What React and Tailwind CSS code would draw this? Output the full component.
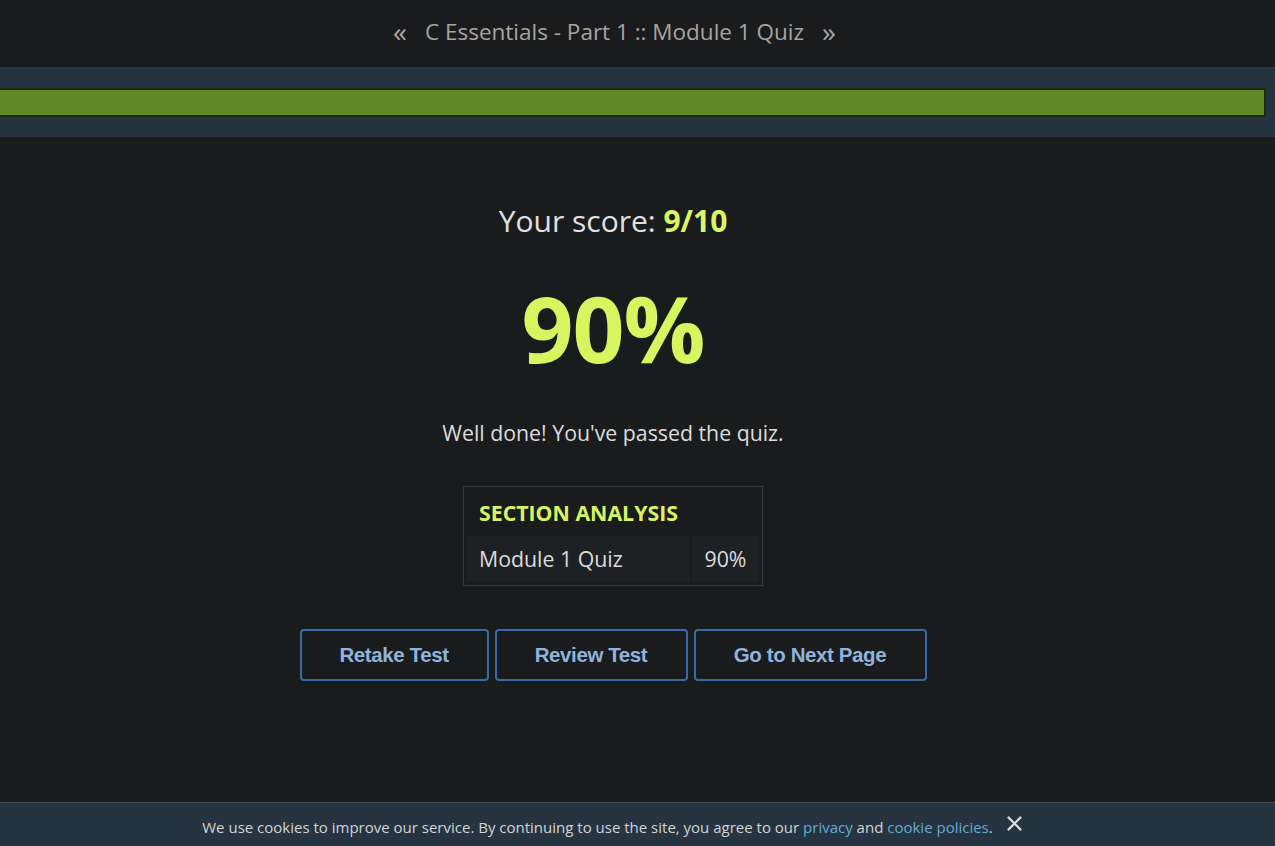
export default function App() {
  const font = { fontFamily: '"Open Sans", "Noto Sans", sans-serif' };
  return (
    <div className="min-h-[846px] bg-[#1a1b1d] flex flex-col" style={font}>
      <div className="h-[67px] flex items-center justify-center gap-[18px] text-[#a9a59e] text-[22.5px] pb-[4px] pr-[46px]">
        <span className="text-[28px] leading-none -mt-[2px]">«</span>
        <span>C Essentials - Part 1 :: Module 1 Quiz</span>
        <span className="text-[28px] leading-none -mt-[2px]">»</span>
      </div>
      <div className="h-[70px] bg-[#263340] flex items-center pr-[9px]">
        <div className="h-[29px] w-full bg-[#5f8a27] border-[2px] border-l-0 border-[#1d2a12]"></div>
      </div>
      <div className="flex-1 flex flex-col items-center pr-[49px]">
        <div className="mt-[64px] text-[30px] text-[#e1e1e1] leading-[40px]">
          Your score: <b className="text-[#dcf563] font-bold">9/10</b>
        </div>
        <div className="mt-[35px] text-[91px] font-bold text-[#d8f45e] leading-[104px] tracking-[-1px]">90%</div>
        <div className="mt-[39px] text-[21.3px] text-[#dcdcdc] leading-[28px]">Well done! You've passed the quiz.</div>
        <div className="mt-[39px] w-[300px] border border-[#3a3b3d] p-[3px] pt-[11px]">
          <div className="px-[12px] text-[21.3px] font-bold text-[#d9f462] leading-[30px] h-[38px]">SECTION ANALYSIS</div>
          <div className="flex gap-[2px] h-[46px] text-[21.3px] text-[#dcdcdc]">
            <div className="flex-1 bg-[#1e2123] flex items-center px-[12px]">Module 1 Quiz</div>
            <div className="w-[67px] bg-[#1e2123] flex items-center justify-center">90%</div>
          </div>
        </div>
        <div className="mt-[43px] flex gap-[6px]" style={{ fontFamily: '"Liberation Sans", Arial, sans-serif' }}>
          {[
            ["Retake Test", "w-[189px]"],
            ["Review Test", "w-[193px]"],
            ["Go to Next Page", "w-[233px]"],
          ].map(([t, w]) => (
            <button key={t} className={`${w} h-[52px] border-2 border-[#3b68a6] rounded-[4px] text-[#8fb3dd] font-bold text-[20.5px] tracking-[-0.4px] bg-[#1a1b1d]`}>
              {t}
            </button>
          ))}
        </div>
      </div>
      <div className="h-[44px] bg-[#263340] border-t border-[#4b4c4d] flex items-center justify-center text-[15px] text-[#d4d4d4] pt-[6px] pr-[50px]">
        <span>
          We use cookies to improve our service. By continuing to use the site, you agree to our{" "}
          <span className="text-[#63abd6]">privacy</span> and <span className="text-[#63abd6]">cookie policies</span>.
        </span>
        <svg className="ml-[13px] -mt-[8px]" width="17" height="17" viewBox="0 0 18 18" fill="none" stroke="#dcdcdc" strokeWidth="2.4">
          <path d="M2 2 L16 16 M16 2 L2 16" />
        </svg>
      </div>
    </div>
  );
}
